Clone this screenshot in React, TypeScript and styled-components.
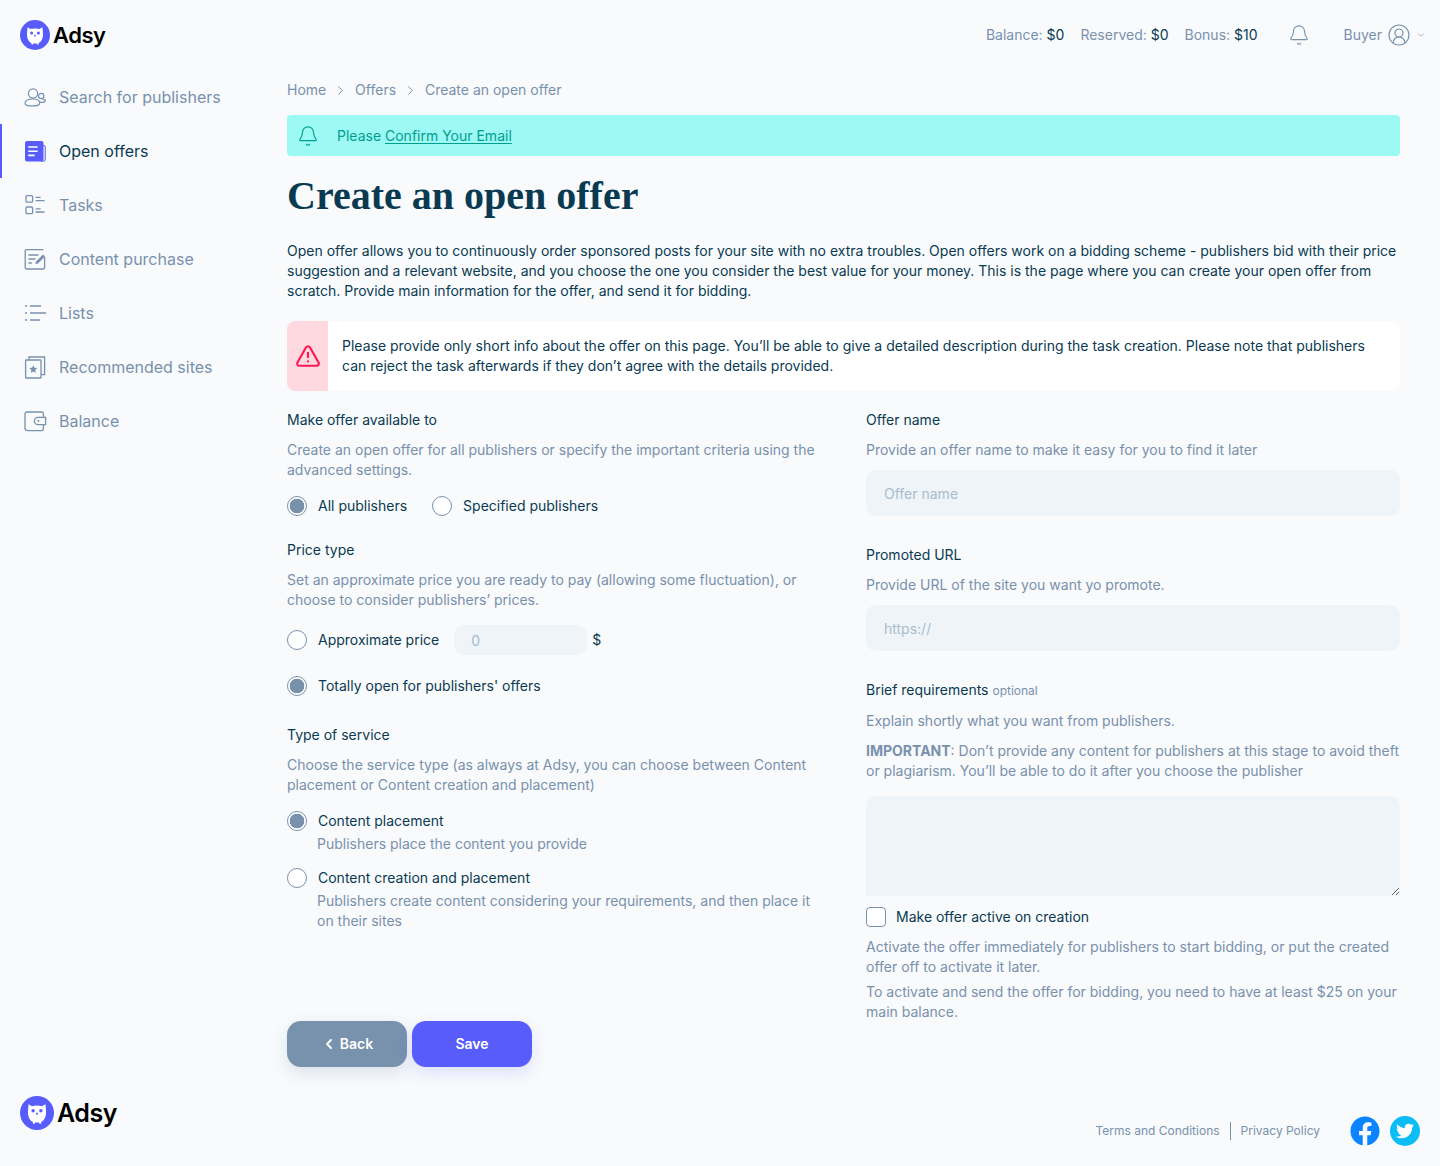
import styled, { createGlobalStyle } from "styled-components";
import { Bell, ChevronDown, ChevronLeft, ChevronRight, CircleUserRound, TriangleAlert } from "lucide-react";
import { FaFacebook, FaTwitter } from "react-icons/fa";
import type { ReactNode } from "react";

const GlobalStyle = createGlobalStyle`
  * { box-sizing: border-box; }
  html, body { margin: 0; padding: 0; background: #f8fafc; }
  body {
    font-family: Inter, "Liberation Sans", sans-serif;
    font-size: 14px;
    line-height: 20px;
    color: #0a3a52;
  }
`;

function Owl() {
  return (
    <svg viewBox="0 0 30 30" width="100%" height="100%">
      <circle cx="15" cy="15" r="15" fill="#585cfa" />
      <path
        d="M7.5 7.2 L10.6 9 C13 8.3 17 8.3 19.4 9 L22.5 7.2 L23 14 C23 19 21 22 18.6 23 L18.6 24.4 L17 24.4 L17 23.4 L13 23.4 L13 24.4 L11.4 24.4 L11.4 23 C9 22 7 19 7 14 Z"
        fill="#fff"
      />
      <circle cx="11.6" cy="13" r="1.5" fill="#585cfa" />
      <circle cx="18.4" cy="13" r="1.5" fill="#585cfa" />
      <path d="M15 14.4 l1 1.3 l-1 1.3 l-1 -1.3 Z" fill="#585cfa" />
    </svg>
  );
}

function IconPublishers() {
  return (
    <svg viewBox="0 0 24 24" width="24" height="24" fill="none" stroke="#7891ad" strokeWidth="1.2">
      <circle cx="10" cy="8.5" r="4.6" />
      <path d="M2 18.5 C2 15.6 5.5 14 10 14 C12.5 14 14.4 14.5 15.6 15.4 C17 16.4 17 19 15.6 20 C14 21.2 6 21.2 4 20.4 C2.8 20 2 19.4 2 18.5 Z" />
      <circle cx="18.2" cy="11" r="2.7" />
      <path d="M17 17.2 C20 17.6 22.4 17 22.4 15.8 C22.4 14.8 21 14.4 19.6 14.4" />
    </svg>
  );
}

function IconOffers() {
  return (
    <svg viewBox="0 0 24 24" width="24" height="24">
      <path d="M19 6.6 h2 a1.2 1.2 0 0 1 1.2 1.2 V21 a1.4 1.4 0 0 1 -1.4 1.2 H18" fill="none" stroke="#585cfa" strokeWidth="1" />
      <rect x="2" y="2" width="18.5" height="20.4" rx="2" fill="#585cfa" />
      <path d="M5.2 8 h9.4 M5.2 12.2 h9.4 M5.2 16.4 h6.4" stroke="#fff" strokeWidth="1.6" />
    </svg>
  );
}

function IconTasks() {
  return (
    <svg viewBox="0 0 24 24" width="24" height="24" fill="none" stroke="#7891ad" strokeWidth="1.3">
      <rect x="3" y="2.6" width="6.6" height="6.6" rx="1.2" />
      <rect x="3" y="14" width="6.6" height="6.6" rx="1.2" />
      <path d="M12.6 4.4 h5 M12.6 7.6 h9 M12.6 15.8 h5 M12.6 19 h9" />
    </svg>
  );
}

function IconPurchase() {
  return (
    <svg viewBox="0 0 24 24" width="24" height="24" fill="none" stroke="#7891ad" strokeWidth="1.3">
      <path d="M21.6 10 V20.6 a1.4 1.4 0 0 1 -1.4 1.4 H3.6 a1.4 1.4 0 0 1 -1.4 -1.4 V4 a1.4 1.4 0 0 1 1.4 -1.4 H20.4" />
      <path d="M5.4 8 h10 M5.4 12 h7 M5.4 16 h3.4" />
      <path d="M12.4 17 L13 14.4 L20 7.4 L22 9.4 L15 16.4 Z" fill="#7891ad" stroke="none" />
    </svg>
  );
}

function IconLists() {
  return (
    <svg viewBox="0 0 24 24" width="24" height="24" fill="none" stroke="#7891ad" strokeWidth="1.3">
      <path d="M7 5 h11 M7 12 h16 M7 19 h10" />
      <path d="M2 5 h2 M2 12 h2 M2 19 h2" />
    </svg>
  );
}

function IconRecommended() {
  return (
    <svg viewBox="0 0 24 24" width="24" height="24" fill="none" stroke="#7891ad" strokeWidth="1.3">
      <rect x="2.6" y="5" width="15.4" height="18" rx="0.6" />
      <path d="M6 5 V2 H21.6 V19.6 H18" />
      <path
        d="M10.3 10.2 l1.2 2.6 l2.8 0.3 l-2.1 1.9 l0.6 2.8 l-2.5 -1.4 l-2.5 1.4 l0.6 -2.8 l-2.1 -1.9 l2.8 -0.3 Z"
        fill="#7891ad"
        stroke="none"
      />
    </svg>
  );
}

function IconBalance() {
  return (
    <svg viewBox="0 0 24 24" width="24" height="24" fill="none" stroke="#7891ad" strokeWidth="1.3">
      <path d="M20.4 8.4 V5 a2 2 0 0 0 -2 -2 H4 a2 2 0 0 0 -2 2 V19 a2.6 2.6 0 0 0 2.6 2.6 H18.4 a2 2 0 0 0 2 -2 V15.6" />
      <path d="M15 8.4 H22.6 V15.6 H15 a3.6 3.6 0 0 1 0 -7.2 Z" />
      <circle cx="15.4" cy="12" r="1" fill="#7891ad" stroke="none" />
    </svg>
  );
}

const navItems: { label: string; icon: ReactNode; active?: boolean }[] = [
  { label: "Search for publishers", icon: <IconPublishers /> },
  { label: "Open offers", icon: <IconOffers />, active: true },
  { label: "Tasks", icon: <IconTasks /> },
  { label: "Content purchase", icon: <IconPurchase /> },
  { label: "Lists", icon: <IconLists /> },
  { label: "Recommended sites", icon: <IconRecommended /> },
  { label: "Balance", icon: <IconBalance /> },
];

function App() {
  return (
    <>
      <GlobalStyle />
      <Page>
        <Header>
          <Logo>
            <LogoMark $size={30}><Owl /></LogoMark>
            <LogoText $size={22}>Adsy</LogoText>
          </Logo>
          <HeaderRight>
            <Stat>Balance: <b>$0</b></Stat>
            <Stat>Reserved: <b>$0</b></Stat>
            <Stat>Bonus: <b>$10</b></Stat>
            <HeaderBell><Bell size={22} strokeWidth={1.2} color="#7891ad" /></HeaderBell>
            <UserMenu>
              Buyer
              <CircleUserRound size={24} strokeWidth={1.2} color="#7891ad" />
              <ChevronDown size={10} strokeWidth={1.6} color="#7891ad" />
            </UserMenu>
          </HeaderRight>
        </Header>

        <Body>
          <Sidebar>
            {navItems.map((item) => (
              <NavItem key={item.label} $active={item.active}>
                {item.icon}
                <span>{item.label}</span>
              </NavItem>
            ))}
          </Sidebar>

          <Main>
            <Breadcrumbs>
              Home <ChevronRight size={15} strokeWidth={1.6} /> Offers <ChevronRight size={15} strokeWidth={1.6} /> Create an open offer
            </Breadcrumbs>

            <ConfirmBar>
              <Bell size={22} strokeWidth={1.3} color="#009e90" />
              <span>Please <ConfirmLink>Confirm Your Email</ConfirmLink></span>
            </ConfirmBar>

            <Title>Create an open offer</Title>

            <Intro>
              Open offer allows you to continuously order sponsored posts for your site with no extra troubles. Open offers work on a bidding scheme - publishers bid with their price suggestion and a relevant website, and you choose the one you consider the best value for your money. This is the page where you can create your open offer from scratch. Provide main information for the offer, and send it for bidding.
            </Intro>

            <Warning>
              <WarningIcon><TriangleAlert size={26} strokeWidth={2} color="#ff1654" /></WarningIcon>
              <WarningText>
                Please provide only short info about the offer on this page. You’ll be able to give a detailed description during the task creation. Please note that publishers can reject the task afterwards if they don’t agree with the details provided.
              </WarningText>
            </Warning>

            <FormGrid>
              <Column>
                <Label>Make offer available to</Label>
                <Hint>Create an open offer for all publishers or specify the important criteria using the advanced settings.</Hint>
                <RadioRow $top={16}>
                  <RadioLabel><Radio name="available" defaultChecked />All publishers</RadioLabel>
                  <RadioLabel><Radio name="available" />Specified publishers</RadioLabel>
                </RadioRow>

                <Label $top={24}>Price type</Label>
                <Hint>Set an approximate price you are ready to pay (allowing some fluctuation), or choose to consider publishers’ prices.</Hint>
                <RadioRow $top={15}>
                  <RadioLabel><Radio name="price" />Approximate price</RadioLabel>
                  <PriceGroup>
                    <PriceInput placeholder="0" />
                    $
                  </PriceGroup>
                </RadioRow>
                <RadioRow $top={21}>
                  <RadioLabel><Radio name="price" defaultChecked />Totally open for publishers' offers</RadioLabel>
                </RadioRow>

                <Label $top={29}>Type of service</Label>
                <Hint>Choose the service type (as always at Adsy, you can choose between Content placement or Content creation and placement)</Hint>
                <RadioRow $top={16}>
                  <RadioLabel><Radio name="service" defaultChecked />Content placement</RadioLabel>
                </RadioRow>
                <SubHint>Publishers place the content you provide</SubHint>
                <RadioRow $top={14}>
                  <RadioLabel><Radio name="service" />Content creation and placement</RadioLabel>
                </RadioRow>
                <SubHint>Publishers create content considering your requirements, and then place it on their sites</SubHint>

                <Buttons>
                  <BackButton><ChevronLeft size={16} strokeWidth={3} />Back</BackButton>
                  <SaveButton>Save</SaveButton>
                </Buttons>
              </Column>

              <Column>
                <Label>Offer name</Label>
                <Hint>Provide an offer name to make it easy for you to find it later</Hint>
                <TextInput placeholder="Offer name" />

                <Label $top={29}>Promoted URL</Label>
                <Hint>Provide URL of the site you want yo promote.</Hint>
                <TextInput placeholder="https://" />

                <Label $top={29}>Brief requirements <Optional>optional</Optional></Label>
                <Hint>Explain shortly what you want from publishers.</Hint>
                <Hint><strong>IMPORTANT</strong>: Don’t provide any content for publishers at this stage to avoid theft or plagiarism. You’ll be able to do it after you choose the publisher</Hint>
                <TextArea />

                <CheckLabel><Checkbox />Make offer active on creation</CheckLabel>
                <Hint>Activate the offer immediately for publishers to start bidding, or put the created offer off to activate it later.</Hint>
                <HintTight>To activate and send the offer for bidding, you need to have at least $25 on your main balance.</HintTight>
              </Column>
            </FormGrid>
          </Main>
        </Body>

        <Footer>
          <Logo>
            <LogoMark $size={34}><Owl /></LogoMark>
            <LogoText $size={25}>Adsy</LogoText>
          </Logo>
          <FooterRight>
            <FooterLink>Terms and Conditions</FooterLink>
            <FooterDivider />
            <FooterLink>Privacy Policy</FooterLink>
            <Social>
              <Facebook><FaFacebook size={30} /></Facebook>
              <Twitter><FaTwitter size={18} /></Twitter>
            </Social>
          </FooterRight>
        </Footer>
      </Page>
    </>
  );
}

const Page = styled.div`
  width: 1440px;
  height: 1166px;
  overflow: hidden;
`;

const Header = styled.header`
  height: 70px;
  padding: 0 14px 0 20px;
  display: flex;
  align-items: center;
  justify-content: space-between;
`;

const Logo = styled.div`
  display: flex;
  align-items: center;
  gap: 3px;
`;

const LogoMark = styled.span<{ $size: number }>`
  display: block;
  width: ${(p) => p.$size}px;
  height: ${(p) => p.$size}px;
`;

const LogoText = styled.span<{ $size: number }>`
  font-size: ${(p) => p.$size}px;
  font-weight: 600;
  color: #000;
  letter-spacing: -0.5px;
`;

const HeaderRight = styled.div`
  display: flex;
  align-items: center;
  gap: 16px;
`;

const Stat = styled.span`
  color: #7891ad;
  b {
    font-weight: 400;
    color: #0a3a52;
  }
`;

const HeaderBell = styled.span`
  display: flex;
  margin: 0 18px 0 14px;
`;

const UserMenu = styled.div`
  display: flex;
  align-items: center;
  gap: 5px;
  color: #7891ad;
`;

const Body = styled.div`
  display: flex;
  height: 1010px;
`;

const Sidebar = styled.nav`
  width: 287px;
  flex: none;
`;

const NavItem = styled.div<{ $active?: boolean }>`
  height: 54px;
  display: flex;
  align-items: center;
  gap: 12px;
  padding-left: 23px;
  font-size: 16px;
  color: ${(p) => (p.$active ? "#0a3a52" : "#7891ad")};
  border-left: ${(p) => (p.$active ? "2px solid #585cfa" : "none")};
  ${(p) => p.$active && "padding-left: 21px;"}
`;

const Main = styled.main`
  width: 1113px;
`;

const Breadcrumbs = styled.div`
  display: flex;
  align-items: center;
  gap: 3px;
  height: 20px;
  margin-top: 10px;
  color: #7891ad;
  white-space: pre;
`;

const ConfirmBar = styled.div`
  height: 41px;
  margin-top: 15px;
  padding: 0 10px;
  display: flex;
  align-items: center;
  gap: 18px;
  background: #9cf9f3;
  border-radius: 4px;
  color: #009e90;
`;

const ConfirmLink = styled.a`
  text-decoration: underline;
  text-underline-offset: 2px;
`;

const Title = styled.h1`
  margin: 17px 0 0;
  font-family: "Liberation Serif", "Times New Roman", serif;
  font-size: 40px;
  line-height: 46px;
  font-weight: 700;
  color: #0a3a52;
`;

const Intro = styled.p`
  margin: 22px 0 0;
`;

const Warning = styled.div`
  margin-top: 20px;
  height: 70px;
  display: flex;
  background: #fff;
  border-radius: 8px;
  overflow: hidden;
`;

const WarningIcon = styled.div`
  width: 41px;
  flex: none;
  display: flex;
  align-items: center;
  justify-content: center;
  background: #ffd9e0;
`;

const WarningText = styled.div`
  padding: 15px 20px 0 14px;
`;

const FormGrid = styled.div`
  margin-top: 19px;
  display: grid;
  grid-template-columns: 534px 534px;
  column-gap: 45px;
`;

const Column = styled.div`
  display: flex;
  flex-direction: column;
`;

const Label = styled.div<{ $top?: number }>`
  margin-top: ${(p) => p.$top ?? 0}px;
`;

const Optional = styled.span`
  font-size: 12px;
  color: #7891ad;
`;

const Hint = styled.p`
  margin: 10px 0 0;
  color: #7891ad;
  strong {
    font-weight: 700;
  }
`;

const HintTight = styled(Hint)`
  margin-top: 5px;
`;

const SubHint = styled.p`
  margin: 3px 0 0 30px;
  color: #7891ad;
`;

const RadioRow = styled.div<{ $top: number }>`
  margin-top: ${(p) => p.$top}px;
  display: flex;
  align-items: center;
  gap: 25px;
  min-height: 20px;
`;

const RadioLabel = styled.label`
  display: flex;
  align-items: center;
  gap: 11px;
`;

const Radio = styled.input.attrs({ type: "radio" })`
  appearance: none;
  flex: none;
  width: 20px;
  height: 20px;
  margin: 0;
  border: 1px solid #7891ad;
  border-radius: 50%;
  background: #fff;
  &:checked {
    background: radial-gradient(circle, #7891ad 0 7px, #fff 7.6px);
  }
`;

const PriceGroup = styled.div`
  display: flex;
  align-items: center;
  gap: 5px;
  margin-left: -10px;
`;

const PriceInput = styled.input`
  width: 133px;
  height: 30px;
  padding: 0 17px;
  border: 0;
  border-radius: 10px;
  background: #eef4f7;
  font: inherit;
  outline: none;
  &::placeholder {
    color: #a9bccf;
  }
`;

const TextInput = styled.input`
  margin-top: 10px;
  height: 46px;
  padding: 0 18px;
  border: 0;
  border-radius: 10px;
  background: #eef4f7;
  font: inherit;
  outline: none;
  &::placeholder {
    color: #a9bccf;
  }
`;

const TextArea = styled.textarea`
  margin-top: 15px;
  height: 100px;
  border: 0;
  background: #eef4f7;
  font: inherit;
  outline: none;
  border-radius: 10px 10px 0 0;
  resize: vertical;
`;

const CheckLabel = styled.label`
  margin-top: 11px;
  display: flex;
  align-items: center;
  gap: 10px;
`;

const Checkbox = styled.input.attrs({ type: "checkbox" })`
  appearance: none;
  width: 20px;
  height: 20px;
  margin: 0;
  border: 1px solid #7891ad;
  border-radius: 4px;
  background: #fff;
`;

const Buttons = styled.div`
  margin-top: 90px;
  display: flex;
  gap: 5px;
`;

const BaseButton = styled.button`
  width: 120px;
  height: 46px;
  border: 0;
  border-radius: 14px;
  display: flex;
  align-items: center;
  justify-content: center;
  gap: 3px;
  color: #fff;
  font: inherit;
  font-weight: 600;
`;

const BackButton = styled(BaseButton)`
  background: #7891ad;
  box-shadow: 0 6px 16px rgba(120, 145, 173, 0.22);
`;

const SaveButton = styled(BaseButton)`
  background: #585cfa;
  box-shadow: 0 6px 16px rgba(88, 92, 250, 0.16);
`;

const Footer = styled.footer`
  height: 86px;
  padding: 16px 20px 0;
  display: flex;
  justify-content: space-between;
  align-items: flex-start;
`;

const FooterRight = styled.div`
  margin-top: 20px;
  display: flex;
  align-items: center;
`;

const FooterLink = styled.span`
  font-size: 12px;
  color: #7891ad;
`;

const FooterDivider = styled.span`
  width: 1px;
  height: 18px;
  margin: 0 10px;
  background: #7891ad;
`;

const Social = styled.div`
  display: flex;
  gap: 10px;
  margin-left: 30px;
`;

const Facebook = styled.span`
  display: flex;
  color: #0a84ff;
`;

const Twitter = styled.span`
  width: 30px;
  height: 30px;
  border-radius: 50%;
  display: flex;
  align-items: center;
  justify-content: center;
  background: #0cbcf5;
  color: #fff;
`;

export default App;
